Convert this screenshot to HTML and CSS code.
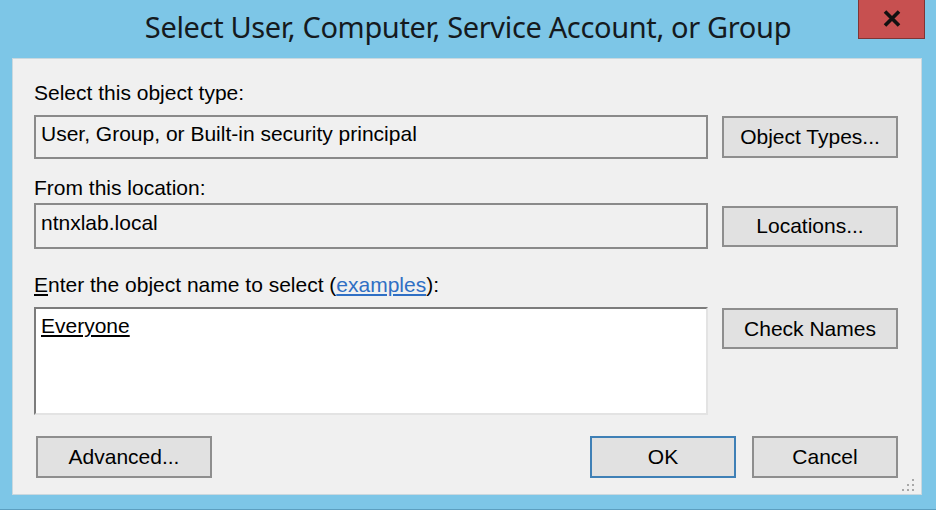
FILE: index.html
```html
<!DOCTYPE html>
<html>
<head>
<meta charset="utf-8">
<link rel="stylesheet" href="styles.css">
</head>
<body>
<div class="window">
  <div class="titlebar">
    <div class="spacer"></div>
    <div class="title">Select User, Computer, Service Account, or Group</div>
    <div class="controls">
      <button class="close" aria-label="Close">
        <svg width="18" height="17" viewBox="0 0 18 17"><path d="M2 1.5 L16 15.5 M16 1.5 L2 15.5" stroke="#111" stroke-width="3.6" stroke-linecap="butt"/></svg>
      </button>
    </div>
  </div>
  <div class="client">
    <div class="label l1">Select this object type:</div>
    <div class="row r1">
      <div class="field f1">User, Group, or Built-in security principal</div>
      <button class="btn b1">Object Types...</button>
    </div>
    <div class="label l2">From this location:</div>
    <div class="row r2">
      <div class="field f2">ntnxlab.local</div>
      <button class="btn b2">Locations...</button>
    </div>
    <div class="label l3"><u>E</u>nter the object name to select (<a class="link" href="#">examples</a>):</div>
    <div class="row r3">
      <div class="names"><span class="resolved">Everyone</span></div>
      <button class="btn b3">Check Names</button>
    </div>
    <div class="bottom">
      <button class="btn adv">Advanced...</button>
      <div class="grow"></div>
      <button class="btn ok">OK</button>
      <button class="btn cancel">Cancel</button>
    </div>
    <svg class="grip" width="14" height="14" viewBox="0 0 14 14">
      <rect x="11" y="1" width="2" height="2" fill="#a8a8a8"/>
      <rect x="6" y="6" width="2" height="2" fill="#a8a8a8"/>
      <rect x="11" y="6" width="2" height="2" fill="#a8a8a8"/>
      <rect x="1" y="11" width="2" height="2" fill="#a8a8a8"/>
      <rect x="6" y="11" width="2" height="2" fill="#a8a8a8"/>
      <rect x="11" y="11" width="2" height="2" fill="#a8a8a8"/>
    </svg>
  </div>
</div>
</body>
</html>
```

FILE: styles.css
```css
* { box-sizing: border-box; }
html, body { margin: 0; padding: 0; }
body {
  width: 936px;
  height: 510px;
  overflow: hidden;
  background: #7dc6e7;
}
.window {
  width: 936px;
  height: 510px;
  background: #7dc6e7;
  border-bottom: 1px solid #5c9fc0;
}
.titlebar {
  height: 58px;
  display: grid;
  grid-template-columns: 1fr auto 1fr;
}
.title {
  padding-top: 9px;
  font-family: "Noto Sans", "Open Sans", sans-serif;
  font-size: 29px;
  line-height: 36px;
  letter-spacing: -0.35px;
  color: #151a1e;
  white-space: nowrap;
}
.controls {
  display: flex;
  justify-content: flex-end;
  align-items: flex-start;
  padding-right: 11px;
}
.close {
  width: 67px;
  height: 39px;
  margin: 0;
  padding: 0;
  background: #c75050;
  border: 1px solid #7e3535;
  border-top: none;
  display: flex;
  align-items: center;
  justify-content: center;
  padding-bottom: 2px;
}
.client {
  position: relative;
  margin: 0 14px 0 12px;
  height: 437px;
  background: #f0f0f0;
  box-shadow: inset 0 0 0 1px #c9d8df;
  padding: 23px 24px 0 22px;
  font-family: "Liberation Sans", Arial, sans-serif;
  font-size: 21px;
  line-height: 24px;
  color: #000;
}
.label { white-space: nowrap; }
.l1 { margin-bottom: 10px; }
.l2 { margin-top: 17px; margin-bottom: 3px; }
.l3 { margin-top: 24px; margin-bottom: 10px; }
.link { color: #2f6fc4; text-decoration: underline; }
.row {
  display: flex;
  align-items: center;
  gap: 14px;
}
.field {
  width: 674px;
  border: 2px solid #8a8a8a;
  background: #f0f0f0;
  padding: 5px 5px 0;
  white-space: nowrap;
}
.f1 { height: 44px; }
.f2 { height: 46px; padding-top: 6px; }
.r3 { align-items: flex-start; }
.names {
  width: 674px;
  height: 108px;
  background: #fff;
  border-style: solid;
  border-width: 2px;
  border-color: #7c7c7c #e3e3e3 #e3e3e3 #7c7c7c;
  padding: 5px 5px;
}
.resolved { text-decoration: underline; }
.btn {
  margin: 0;
  padding: 0;
  width: 176px;
  height: 42px;
  background: #e1e1e1;
  border: 2px solid #8e8e8e;
  font-family: "Liberation Sans", Arial, sans-serif;
  font-size: 21px;
  line-height: 24px;
  color: #000;
  text-align: center;
}
.b2 { height: 41px; }
.b3 { height: 41px; margin-top: 1px; }
.bottom {
  display: flex;
  gap: 16px;
  margin-top: 21px;
}
.grow { flex: 1; }
.adv { margin-left: 2px; }
.ok, .cancel { width: 146px; }
.ok { border-color: #3f80b6; }
.grip {
  position: absolute;
  right: 7px;
  bottom: 3px;
}
```
